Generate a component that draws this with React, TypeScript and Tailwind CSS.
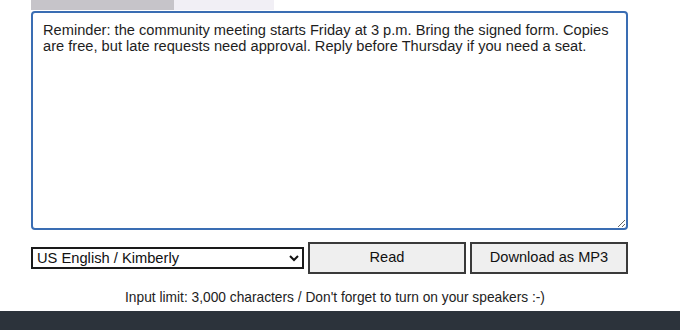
import React from "react";

export default function App() {
  const text =
    "Reminder: the community meeting starts Friday at 3 p.m. Bring the signed form. Copies are free, but late requests need approval. Reply before Thursday if you need a seat.";
  return (
    <div className="w-[680px] h-[330px] bg-white flex flex-col overflow-hidden" style={{ fontFamily: '"Liberation Sans", Arial, sans-serif' }}>
      <div className="flex h-[11px] pl-[31px]">
        <div className="w-[143px] h-[10px] bg-[#c6c4c9]" />
        <div className="w-[100px] h-[10px] bg-[#f1eff5]" />
      </div>
      <div className="pl-[31px]">
        <textarea
          defaultValue={text}
          className="block w-[597px] h-[219px] border-2 border-[#3a6db3] rounded-[4px] pl-[10px] pr-[8px] pt-[10px] text-[14.65px] leading-[15.5px] text-[#1e1e1e] resize-y outline-none bg-white"
          style={{ fontFamily: '"Liberation Sans", Arial, sans-serif' }}
        />
        <div className="flex items-center gap-[4px] mt-[12px]">
          <select
            className="w-[273px] h-[22px] border-2 border-[#1a1a1a] bg-white text-[14.7px] text-[#111] pl-0"
            style={{ fontFamily: '"Liberation Sans", Arial, sans-serif' }}
            defaultValue="us"
          >
            <option value="us">US English / Kimberly</option>
          </select>
          <button className="w-[158px] h-[32px] border-2 border-[#3a3a3a] bg-[#efefef] text-[14.6px] text-[#111]">
            Read
          </button>
          <button className="w-[158px] h-[32px] border-2 border-[#3a3a3a] bg-[#efefef] text-[14.6px] text-[#111]">
            Download as MP3
          </button>
        </div>
        <div className="w-[608px] text-center text-[13.75px] leading-[16px] text-[#222] mt-[16px]">
          Input limit: 3,000 characters / Don't forget to turn on your speakers :-)
        </div>
      </div>
      <div className="mt-[5px] flex-1 bg-[#2c333b]" />
    </div>
  );
}
